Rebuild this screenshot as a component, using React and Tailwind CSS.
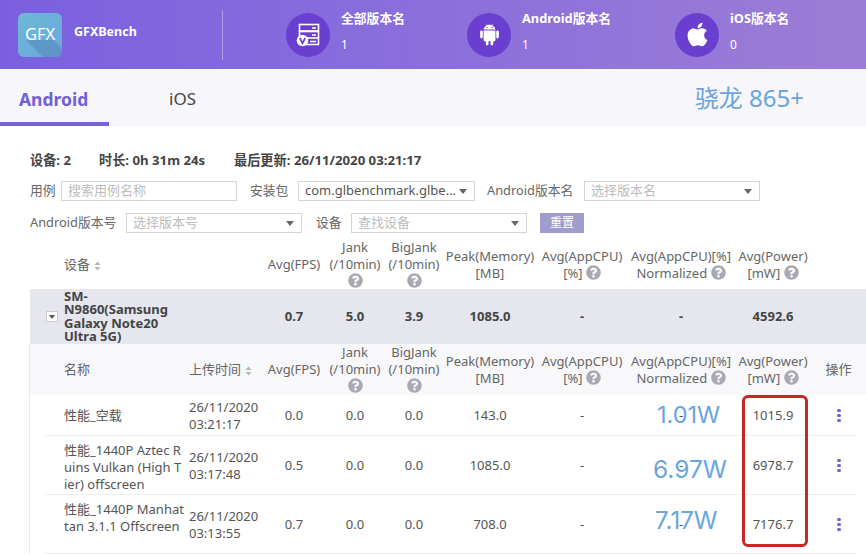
import React from 'react';
import { AiFillAndroid } from 'react-icons/ai';
import { FaApple, FaQuestionCircle } from 'react-icons/fa';

const cols = 'grid grid-cols-[34px_125px_74px_62px_60px_58px_94px_90px_108px_76px_55px]';
const font = "font-['Noto_Sans','Noto_Sans_CJK_SC',sans-serif]";

function Help({ className = '' }) {
  return <FaQuestionCircle className={`inline-block text-[15px] text-[#a9a9b3] align-[-2px] ${className}`} />;
}

function SortIcon() {
  return (
    <svg width="7" height="10" viewBox="0 0 7 10" className="inline-block ml-[4px]">
      <path d="M3.5 0.5 L6.5 4 H0.5 Z M3.5 9.5 L0.5 6 H6.5 Z" fill="#b5b5bd" />
    </svg>
  );
}

function Caret() {
  return (
    <svg width="8" height="5" viewBox="0 0 8 5" className="absolute right-[7px] top-[7px]">
      <path d="M0 0 H8 L4 5 Z" fill="#666" />
    </svg>
  );
}

function ServerIcon() {
  return (
    <svg width="24" height="24" viewBox="0 0 24 24" fill="none" stroke="#fff" strokeWidth="1.6">
      <rect x="3.5" y="1.5" width="19" height="6.5" />
      <rect x="3.5" y="8.5" width="19" height="6.5" />
      <path d="M9 15.5 V21.5 H22.5 V15.5" />
      <path d="M16 5 H20 M16 12 H20 M14 18.5 H20" />
      <circle cx="6.5" cy="17.5" r="5.8" fill="#fff" stroke="none" />
      <path d="M3.8 15 L6.5 20.2 L9.2 15" stroke="#6a3fd0" strokeWidth="1.7" />
    </svg>
  );
}

function Stat({ icon, title, value, width }) {
  return (
    <div className={`flex items-center shrink-0 ${width}`}>
      <div className="w-[44px] h-[44px] rounded-full bg-[#6a3fd0] flex items-center justify-center text-white">
        {icon}
      </div>
      <div className="ml-[11px] -mt-[6px] text-white">
        <div className="text-[12.8px] font-bold leading-[18px] -mt-[1px]">{title}</div>
        <div className="text-[12px] leading-[18px] mt-[9px]">{value}</div>
      </div>
    </div>
  );
}

function Box({ text, placeholder, caret, width }) {
  return (
    <div
      className={`relative h-[20px] border border-[#d5d5d5] bg-white px-[6px] text-[13px] leading-[17px] overflow-hidden whitespace-nowrap ${width} ${
        placeholder ? 'text-[#bdbdbd]' : 'text-[#555]'
      }`}
    >
      {text}
      {caret && <Caret />}
    </div>
  );
}

function Dots() {
  return (
    <div className="flex flex-col gap-[1.5px] items-center">
      <span className="w-[4px] h-[3.5px] rounded-full bg-[#7060d8]" />
      <span className="w-[4px] h-[3.5px] rounded-full bg-[#7060d8]" />
      <span className="w-[4px] h-[3.5px] rounded-full bg-[#7060d8]" />
    </div>
  );
}

function HeaderCells() {
  return (
    <>
      <div className="text-center self-center -mx-[3px]">Avg(FPS)</div>
      <div className="text-center -mx-[3px] whitespace-nowrap">
        Jank<br />(/10min)<br /><Help />
      </div>
      <div className="text-center -mx-[3px] whitespace-nowrap">
        BigJank<br />(/10min)<br /><Help />
      </div>
      <div className="text-center self-center whitespace-nowrap">Peak(Memory)<br />[MB]</div>
      <div className="text-center self-center whitespace-nowrap">Avg(AppCPU)<br />[%] <Help /></div>
      <div className="text-center self-center whitespace-nowrap">Avg(AppCPU)[%]<br />Normalized <Help /></div>
      <div className="text-center self-center whitespace-nowrap">Avg(Power)<br />[mW] <Help /></div>
    </>
  );
}

const rows = [
  { name: ['性能_空载'], nameCls: '', date: '26/11/2020', time: '03:21:17', fps: '0.0', mem: '143.0', power: '1015.9', watt: '1.01W', wattCls: 'text-[23.5px] left-[30px] -top-[7px]', h: 'h-[41px]' },
  { name: ['性能_1440P Aztec R', 'uins Vulkan (High T', 'ier) offscreen'], nameCls: 'self-start pt-[6px]', date: '26/11/2020', time: '03:17:48', fps: '0.5', mem: '1085.0', power: '6978.7', watt: '6.97W', wattCls: 'text-[24.5px] left-[26px] -top-[3px]', h: 'h-[59px]' },
  { name: ['性能_1440P Manhat', 'tan 3.1.1 Offscreen'], nameCls: 'self-start pt-[6px]', date: '26/11/2020', time: '03:13:55', fps: '0.7', mem: '708.0', power: '7176.7', watt: '7.17W', wattCls: 'text-[24px] left-[28px] -top-[10px]', h: 'h-[59px]' },
];

export default function App() {
  return (
    <div className={`w-[866px] h-[555px] overflow-hidden bg-white ${font} text-[13px] text-[#666]`}>
      {/* top bar */}
      <div className="h-[69px] flex items-center pl-[18px] bg-gradient-to-r from-[#7a60e0] to-[#9c7dd6] shadow-[0_2px_4px_rgba(120,100,220,0.3)] relative">
        <div className="relative w-[44px] h-[44px] rounded-[6px] overflow-hidden bg-gradient-to-br from-[#6cb9d4] to-[#6aa6e0] flex items-center justify-center text-white text-[16.5px] shrink-0">
          <svg width="44" height="44" viewBox="0 0 44 44" className="absolute inset-0">
            <path d="M8 27 H36 L44 36 V44 H25 Z" fill="#4f7fae" opacity="0.45" />
          </svg>
          <span className="relative">GFX</span>
        </div>
        <div className="ml-[12px] -mt-[4px] w-[148px] text-white font-bold text-[12.5px] shrink-0">GFXBench</div>
        <div className="w-px h-[50px] bg-[#ad9dea]" />
        <div className="w-[63px] shrink-0" />
        <Stat icon={<ServerIcon />} title="全部版本名" value="1" width="w-[181px]" />
        <Stat icon={<AiFillAndroid className="text-[25px]" />} title="Android版本名" value="1" width="w-[208px]" />
        <Stat icon={<FaApple className="text-[27px]" />} title="iOS版本名" value="0" width="w-[180px]" />
      </div>

      {/* tabs */}
      <div className="h-[57px] bg-[#f6f6fb] flex items-center relative">
        <div className="w-[109px] h-full border-b-[4px] border-[#7561dc] pl-[19px] pt-[18px] text-[17.5px] font-bold leading-[24px] text-[#7060d8] shrink-0">
          Android
        </div>
        <div className="ml-[60px] text-[17px] text-[#444] mt-[3px]">iOS</div>
        <div className="ml-auto mr-[62px] text-[24px] text-[#6aa5de]">骁龙 865+</div>
      </div>

      <div className="pl-[30px]">
        {/* summary */}
        <div className="flex font-bold text-[#444] text-[13.2px] pt-[25px] leading-[18px]">
          <span className="w-[69px]">设备: 2</span>
          <span className="w-[135px]">时长: 0h 31m 24s</span>
          <span>最后更新: 26/11/2020 03:21:17</span>
        </div>

        {/* filters */}
        <div className="flex items-center mt-[12px] h-[20px] whitespace-nowrap text-[12.8px]">
          <span className="w-[31px]">用例</span>
          <Box text="搜索用例名称" placeholder width="w-[176px]" />
          <span className="ml-[13px] w-[48px]">安装包</span>
          <Box text="com.glbenchmark.glbe..." caret width="w-[177px]" />
          <span className="ml-[12px] w-[97px]">Android版本名</span>
          <Box text="选择版本名" placeholder caret width="w-[176px]" />
        </div>
        <div className="flex items-center mt-[12px] h-[20px] whitespace-nowrap text-[12.8px]">
          <span className="w-[96px]">Android版本号</span>
          <Box text="选择版本号" placeholder caret width="w-[176px]" />
          <span className="ml-[14px] w-[35px]">设备</span>
          <Box text="查找设备" placeholder caret width="w-[176px]" />
          <div className="ml-[13px] w-[44px] h-[20px] bg-[#a09ccb] text-white text-center text-[12px] leading-[20px]">
            重置
          </div>
        </div>

        {/* device table */}
        <div className={`${cols} h-[56px] leading-[17px] pt-[6px]`}>
          <div />
          <div className="self-center">
            设备<SortIcon />
          </div>
          <div />
          <HeaderCells />
        </div>
        <div className={`${cols} h-[55px] bg-[#e6e6ee] items-center text-center font-bold text-[#444]`}>
          <div className="flex justify-end pr-[6px]">
            <div className="w-[12px] h-[11px] bg-white border border-[#ccc] flex items-center justify-center">
              <svg width="6" height="4" viewBox="0 0 6 4"><path d="M0 0 H6 L3 4 Z" fill="#555" /></svg>
            </div>
          </div>
          <div className="text-left leading-[13.5px]">SM-<br />N9860(Samsung<br />Galaxy Note20<br />Ultra 5G)</div>
          <div />
          <div>0.7</div>
          <div>5.0</div>
          <div>3.9</div>
          <div>1085.0</div>
          <div>-</div>
          <div>-</div>
          <div>4592.6</div>
          <div />
        </div>

        {/* test rows */}
        <div className="relative border-l-[1px] border-[#e8e8ee] -ml-px">
          <div className={`${cols} h-[51px] bg-[#f8f8fb] leading-[17px]`}>
            <div />
            <div className="self-center">名称</div>
            <div className="self-center whitespace-nowrap">上传时间<SortIcon /></div>
            <HeaderCells />
            <div className="self-center text-center">操作</div>
          </div>
          {rows.map((r) => (
            <div key={r.power} className={`${cols} ${r.h} items-center text-center text-[#555] leading-[17px] relative`}>
              <div className="absolute left-[15px] right-[10px] bottom-0 h-px bg-[#eeeef2]" />
              <div />
              <div className={`text-left whitespace-nowrap ${r.nameCls}`}>
                {r.name.map((line) => (
                  <div key={line}>{line}</div>
                ))}
              </div>
              <div className="text-left">{r.date}<br />{r.time}</div>
              <div>{r.fps}</div>
              <div>0.0</div>
              <div>0.0</div>
              <div>{r.mem}</div>
              <div>-</div>
              <div className="relative">
                -
                <span className={`absolute text-[#6aa5de] leading-[30px] whitespace-nowrap font-['Inter',sans-serif] ${r.wattCls}`}>
                  {r.watt}
                </span>
              </div>
              <div>{r.power}</div>
              <div className="flex justify-center"><Dots /></div>
            </div>
          ))}
          <div className="absolute left-[712px] top-[51px] w-[66px] h-[152px] border-[3px] border-[#c62828] rounded-[6px]" />
        </div>
      </div>
    </div>
  );
}
